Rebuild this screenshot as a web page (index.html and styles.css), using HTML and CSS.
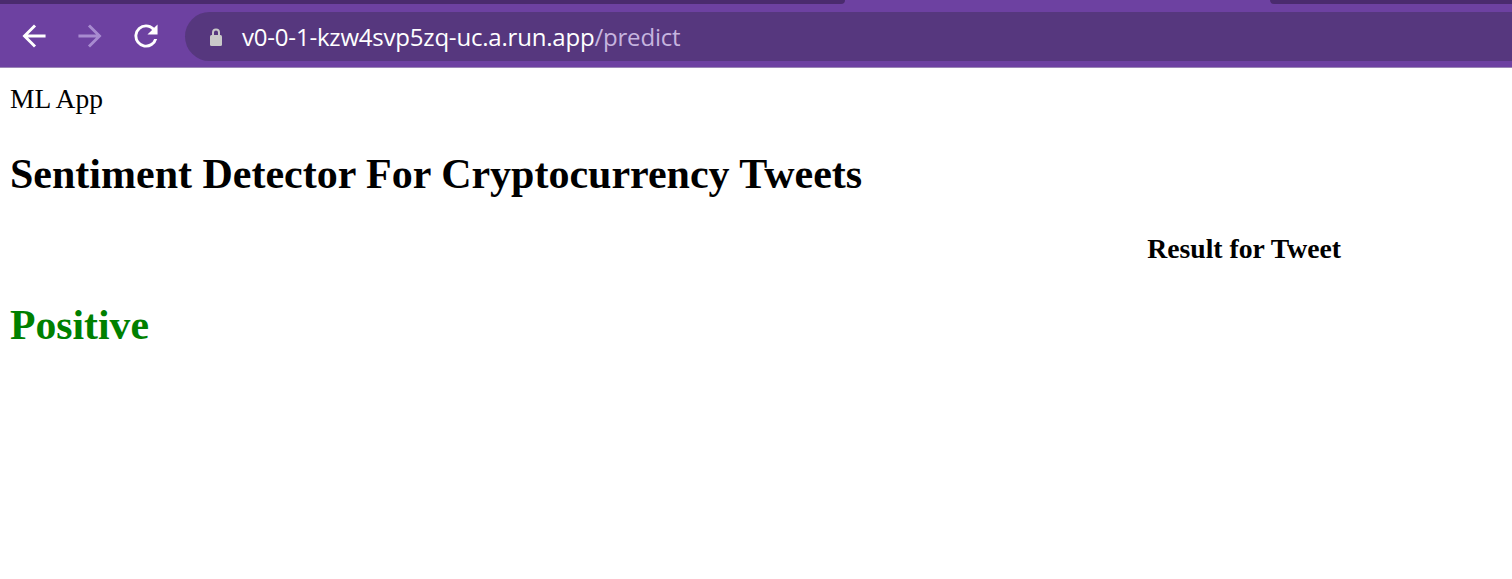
FILE: index.html
```html
<!DOCTYPE html>
<html>
<head>
<meta charset="utf-8">
<title>ML App</title>
<link rel="stylesheet" href="styles.css">
</head>
<body>
<header class="chrome">
  <div class="tabstrip">
    <div class="tab-dark left"></div>
    <div class="tab-active"></div>
    <div class="tab-dark right"></div>
  </div>
  <div class="toolbar">
    <div class="nav">
      <svg class="icon" viewBox="3 3 18 18" width="26" height="26"><path d="M20 11H7.83l5.59-5.59L12 4l-8 8 8 8 1.41-1.41L7.83 13H20v-2z" fill="#ffffff"/></svg>
      <svg class="icon" viewBox="3 3 18 18" width="26" height="26"><path d="M4 11h12.17l-5.59-5.59L12 4l8 8-8 8-1.41-1.41L16.17 13H4v-2z" fill="#a88bd0"/></svg>
      <svg class="icon" viewBox="3 3 18 18" width="26" height="26"><path d="M17.65 6.35A7.960 7.960 0 0 0 12 4a8 8 0 1 0 7.73 10h-2.08A6 6 0 1 1 12 6c1.66 0 3.14.69 4.22 1.78L13 11h7V4l-2.35 2.35z" fill="#ffffff"/></svg>
    </div>
    <div class="omnibox">
      <svg class="lock" viewBox="0 0 16 20" width="16" height="20"><path d="M4 8V5.5a4 4 0 0 1 8 0V8h-2V5.5a2 2 0 0 0-4 0V8z" fill="#c9c9c9"/><rect x="2" y="8" width="12" height="11" rx="1.5" fill="#c9c9c9"/></svg>
      <span class="host">v0-0-1-kzw4svp5zq-uc.a.run.app</span><span class="path">/predict</span>
    </div>
  </div>
</header>
<main class="page">
  <div class="brand">ML App</div>
  <h1 class="title">Sentiment Detector For Cryptocurrency Tweets</h1>
  <div class="result-row"><h3 class="result-label">Result for Tweet</h3></div>
  <h1 class="positive">Positive</h1>
</main>
</body>
</html>
```
FILE: styles.css
```css
html, body {
  margin: 0;
  padding: 0;
  background: #ffffff;
}
body {
  font-family: "Liberation Serif", "Times New Roman", serif;
  color: #000;
}
.chrome {
  display: flex;
  flex-direction: column;
  background: #6d41a1;
  border-bottom: 1px solid #9b86b6;
}
.tabstrip {
  display: flex;
  height: 4px;
}
.tab-dark {
  background: #4a2b6e;
}
.tab-dark.left {
  width: 845px;
  border-bottom-right-radius: 8px;
}
.tab-active {
  flex: 0 0 425px;
  background: #6d41a1;
}
.tab-dark.right {
  flex: 1;
  border-bottom-left-radius: 8px;
}
.toolbar {
  display: flex;
  align-items: center;
  height: 63px;
}
.nav {
  display: flex;
  align-items: center;
  gap: 30px;
  padding-left: 21px;
  padding-right: 26px;
}
.icon {
  display: block;
}
.omnibox {
  flex: 1;
  height: 49px;
  margin-top: 1px;
  background: #56377e;
  border-radius: 25px 0 0 25px;
  display: flex;
  align-items: center;
  padding-left: 23px;
  font-family: "Open Sans", "Noto Sans", sans-serif;
  font-size: 24px;
  letter-spacing: -0.2px;
}
.lock {
  margin-right: 18px;
  margin-top: 2px;
}
.host {
  color: #ffffff;
}
.path {
  color: #c6b4df;
}
.page {
  padding: 0 10px;
}
.brand {
  font-size: 27.5px;
  margin-top: 15px;
  line-height: 32px;
}
.title {
  font-size: 42px;
  font-weight: bold;
  margin: 35px 0 0;
  line-height: 48px;
}
.result-row {
  display: flex;
  justify-content: flex-end;
  padding-right: 161px;
}
.result-label {
  font-size: 27.7px;
  font-weight: bold;
  margin: 35px 0 0;
  line-height: 32px;
}
.positive {
  font-size: 41.7px;
  font-weight: bold;
  color: #008000;
  margin: 36px 0 0;
  line-height: 48px;
}
```
